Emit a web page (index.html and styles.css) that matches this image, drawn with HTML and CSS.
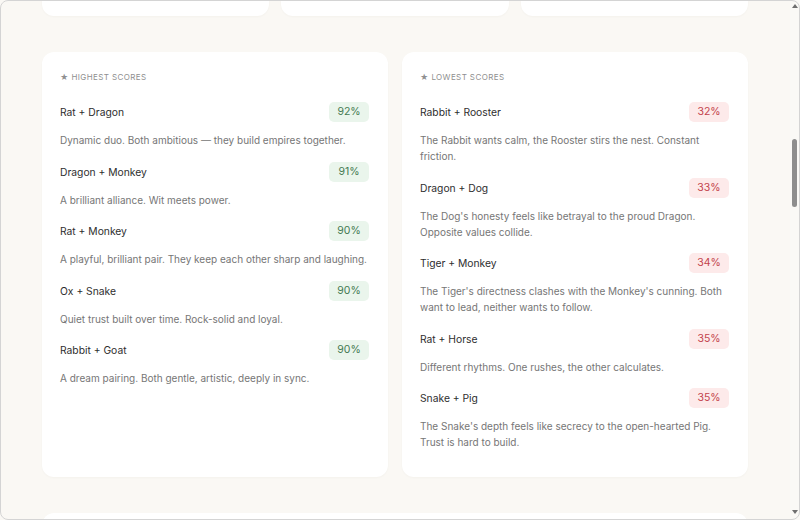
FILE: index.html
```html
<!DOCTYPE html>
<html lang="en">
<head>
  <meta charset="UTF-8" />
  <meta name="viewport" content="width=device-width, initial-scale=1.0"/>
  <title>Zodiac Compatibility</title>
  <link rel="stylesheet" href="styles.css">
</head>
<body>
  <main class="page">
    <section class="stats">
      <div class="card stat"></div>
      <div class="card stat"></div>
      <div class="card stat"></div>
    </section>

    <section class="extremes">
      <div class="card list">
        <div class="label">★ Highest scores</div>
        <div class="pair">
          <div class="pair-head"><span class="pair-name">Rat + Dragon</span><span class="score high">92%</span></div>
          <p class="pair-note">Dynamic duo. Both ambitious — they build empires together.</p>
        </div>
        <div class="pair">
          <div class="pair-head"><span class="pair-name">Dragon + Monkey</span><span class="score high">91%</span></div>
          <p class="pair-note">A brilliant alliance. Wit meets power.</p>
        </div>
        <div class="pair">
          <div class="pair-head"><span class="pair-name">Rat + Monkey</span><span class="score high">90%</span></div>
          <p class="pair-note">A playful, brilliant pair. They keep each other sharp and laughing.</p>
        </div>
        <div class="pair">
          <div class="pair-head"><span class="pair-name">Ox + Snake</span><span class="score high">90%</span></div>
          <p class="pair-note">Quiet trust built over time. Rock-solid and loyal.</p>
        </div>
        <div class="pair">
          <div class="pair-head"><span class="pair-name">Rabbit + Goat</span><span class="score high">90%</span></div>
          <p class="pair-note">A dream pairing. Both gentle, artistic, deeply in sync.</p>
        </div>
      </div>

      <div class="card list">
        <div class="label">★ Lowest scores</div>
        <div class="pair">
          <div class="pair-head"><span class="pair-name">Rabbit + Rooster</span><span class="score low">32%</span></div>
          <p class="pair-note">The Rabbit wants calm, the Rooster stirs the nest. Constant friction.</p>
        </div>
        <div class="pair">
          <div class="pair-head"><span class="pair-name">Dragon + Dog</span><span class="score low">33%</span></div>
          <p class="pair-note">The Dog's honesty feels like betrayal to the proud Dragon. Opposite values collide.</p>
        </div>
        <div class="pair">
          <div class="pair-head"><span class="pair-name">Tiger + Monkey</span><span class="score low">34%</span></div>
          <p class="pair-note">The Tiger's directness clashes with the Monkey's cunning. Both want to lead, neither wants to follow.</p>
        </div>
        <div class="pair">
          <div class="pair-head"><span class="pair-name">Rat + Horse</span><span class="score low">35%</span></div>
          <p class="pair-note">Different rhythms. One rushes, the other calculates.</p>
        </div>
        <div class="pair">
          <div class="pair-head"><span class="pair-name">Snake + Pig</span><span class="score low">35%</span></div>
          <p class="pair-note">The Snake's depth feels like secrecy to the open-hearted Pig. Trust is hard to build.</p>
        </div>
      </div>
    </section>

    <section class="card signs"></section>
  </main>

  <!-- window scrollbar -->
  <div class="scrollbar">
    <span class="arrow up"></span>
    <span class="thumb"></span>
    <span class="arrow down"></span>
  </div>
  <div class="frame"></div>
</body>
</html>
```

FILE: styles.css
```css
html {
  background: #faf8f4;
}
body {
  margin: 0 10px 0 0;
  font-family: Inter, "Noto Sans", sans-serif;
  color: #2e2e2e;
  height: 520px;
  overflow: hidden;
}
.page {
  max-width: 706px;
  margin: 0 auto;
  display: flex;
  flex-direction: column;
  gap: 36px;
}
.card {
  background: #fff;
  border-radius: 12px;
  box-shadow: 0 1px 2px rgba(60, 50, 30, 0.03);
}
.stats {
  display: grid;
  grid-template-columns: repeat(3, 1fr);
  gap: 12px;
}
.stat {
  height: 16px;
  border-radius: 0 0 12px 12px;
}
.label {
  font-size: 8px;
  line-height: 10px;
  letter-spacing: 0.4px;
  text-transform: uppercase;
  color: #8f8f8f;
}
.extremes {
  display: grid;
  grid-template-columns: 1fr 1fr;
  gap: 14px;
}
.list {
  padding: 20px 19px 27px 18px;
}
.list .label {
  margin-bottom: 20px;
}
.pair + .pair {
  margin-top: 13.5px;
}
.pair-head {
  display: flex;
  justify-content: space-between;
  align-items: center;
  height: 20px;
}
.pair-name {
  font-size: 10.3px;
  color: #2e2e2e;
}
.score {
  font-size: 10.5px;
  line-height: 20px;
  padding: 0 7px;
  min-width: 26px;
  text-align: center;
  border-radius: 5px;
}
.score.high {
  background: #eaf5ec;
  color: #447a52;
}
.score.low {
  background: #fdeaea;
  color: #c3424c;
}
.pair-note {
  margin: 10px 0 0;
  font-size: 10px;
  line-height: 16px;
  color: #767676;
}
.signs {
  height: 60px;
}
.scrollbar {
  position: fixed;
  top: 0;
  right: 0;
  bottom: 0;
  width: 10px;
  background: #faf9f6;
}
.thumb {
  position: absolute;
  top: 139px;
  left: 2px;
  width: 5px;
  height: 68px;
  border-radius: 3px;
  background: #8e8e8e;
}
.arrow {
  position: absolute;
  left: 2px;
  width: 0;
  height: 0;
  border-left: 3px solid transparent;
  border-right: 3px solid transparent;
}
.arrow.up {
  top: 4px;
  border-bottom: 4px solid #6f6f6f;
}
.arrow.down {
  bottom: 6px;
  border-top: 4px solid #6f6f6f;
}
.frame {
  position: fixed;
  inset: 0;
  border: 1px solid #d4d4d4;
  border-radius: 8px;
  pointer-events: none;
}
```
